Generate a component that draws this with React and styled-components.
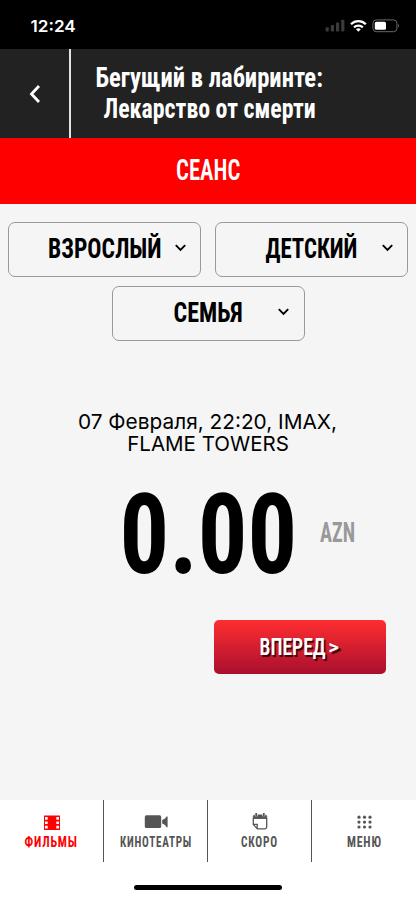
import React, { useLayoutEffect, useRef, useState } from 'react';
import styled, { createGlobalStyle, css } from 'styled-components';

const GlobalStyle = createGlobalStyle`
  * {
    box-sizing: border-box;
  }
  body {
    margin: 0;
    background: #f5f5f5;
  }
  button {
    border: 0;
    padding: 0;
    background: none;
    color: inherit;
    font: inherit;
  }
`;

const Condensed = css`
  font-family: Roboto, "Open Sans", sans-serif;
  font-stretch: 75%;
`;

const FitBox = styled.span`
  display: flex;
  justify-content: center;
  flex: none;
  width: ${(props) => props.$width}px;
`;

const FitText = styled.span`
  flex: none;
  white-space: nowrap;
`;

// squeezes a line of text to the given width, keeping its height
function Fit({ width, children }) {
  const text = useRef(null);
  const [scale, setScale] = useState(1);

  useLayoutEffect(() => {
    setScale(width / text.current.offsetWidth);
  }, [width, children]);

  return (
    <FitBox $width={width}>
      <FitText ref={text} style={{ transform: `scaleX(${scale})` }}>{children}</FitText>
    </FitBox>
  );
}

const Screen = styled.div`
  display: flex;
  flex-direction: column;
  width: 416px;
  height: 900px;
  overflow: hidden;
  background: #f5f5f5;
  color: #000;
  ${Condensed}
`;

const StatusBar = styled.div`
  display: flex;
  justify-content: space-between;
  flex: none;
  height: 49px;
  padding: 16px 16px 0 31px;
  background: #000;
  color: #fff;
  font: 600 16px/20px Inter, sans-serif;
`;

const Header = styled.header`
  display: flex;
  flex: none;
  height: 89px;
  background: #222;
  color: #fff;
`;

const BackButton = styled.button`
  display: flex;
  align-items: center;
  justify-content: center;
  width: 71px;
  border-right: 2px solid #e4e4e4;
`;

const Title = styled.h1`
  display: flex;
  flex-direction: column;
  align-items: center;
  margin: 0;
  padding: 13px 0 0 25px;
  font-size: 28px;
  font-weight: 700;
  line-height: 31px;
`;

const Banner = styled.div`
  display: flex;
  justify-content: center;
  flex: none;
  height: 66px;
  padding-top: 12px;
  background: #f00;
  color: #fff;
  font-size: 29px;
  font-weight: 600;
  line-height: 40px;
`;

const Tickets = styled.div`
  display: flex;
  flex-wrap: wrap;
  justify-content: center;
  gap: 9px 14px;
  flex: none;
  padding: 18px 8px 0;
`;

const Select = styled.button`
  display: grid;
  grid-template-columns: 31px 1fr 31px;
  justify-items: center;
  width: 193px;
  height: 55px;
  padding-top: 6px;
  border: 1px solid #999;
  border-radius: 7px;
  font-size: 28.5px;
  font-weight: 700;
  line-height: 40px;

  & svg {
    margin: 15px 9px 0 0;
  }
`;

const Session = styled.div`
  display: flex;
  flex-direction: column;
  align-items: center;
  flex: none;
  margin-top: 70px;
  font: 400 20.5px/22px Inter, sans-serif;
`;

const Total = styled.div`
  display: flex;
  flex: none;
  height: 110px;
  margin-top: 25px;
  padding-left: 119px;
  font-size: 111px;
  font-weight: 700;
  line-height: 110px;
`;

const Currency = styled.span`
  margin-left: 23px;
  padding-top: 33px;
  color: #999;
  font-size: 27px;
  line-height: 40px;
`;

const NextButton = styled.button`
  display: flex;
  justify-content: center;
  flex: none;
  align-self: flex-end;
  gap: 3px;
  width: 172px;
  height: 54px;
  margin: 30px 30.5px 0 0;
  padding-top: 7px;
  border-radius: 5px;
  background: linear-gradient(#ff2e30, #a90f2e);
  color: #fff;
  font-size: 24px;
  font-weight: 600;
  line-height: 40px;
  text-shadow: 2px 2px 1px rgba(0, 0, 0, 0.75);
`;

const Arrow = styled.span`
  font-size: 20px;
`;

const BottomBar = styled.footer`
  flex: none;
  height: 100px;
  margin-top: auto;
  background: #fff;
`;

const Tabs = styled.nav`
  display: grid;
  grid-template-columns: repeat(4, 1fr);
  height: 62px;
`;

const Tab = styled.button`
  display: flex;
  flex-direction: column;
  align-items: center;
  justify-content: flex-start;
  border-right: 1px solid #555;
  color: ${(props) => (props.$active ? '#f00' : '#555')};
  font-size: 14.5px;
  font-weight: 700;
  letter-spacing: 1px;
  line-height: 20px;

  &:last-child {
    border-right: 0;
  }
  & svg {
    margin: 12px 0 3px;
  }
`;

const HomeIndicator = styled.div`
  width: 148px;
  height: 5px;
  margin: 23px auto 0;
  border-radius: 3px;
  background: #000;
`;

function StatusIcons() {
  return (
    <svg width="76" height="16" viewBox="324 16 76 16" overflow="visible">
      <g fill="#3a3a3a">
        <rect x="325.6" y="27.3" width="3.2" height="4.2" rx="0.8" />
        <rect x="330.8" y="25" width="3.2" height="6.5" rx="0.8" />
        <rect x="336" y="22.5" width="3.2" height="9" rx="0.8" />
        <rect x="341.2" y="19.8" width="3.2" height="11.7" rx="0.8" />
      </g>
      <g fill="none" stroke="#fff" strokeWidth="2.3">
        <path d="M351 24.2 a10.6 10.6 0 0 1 14.8 0" />
        <path d="M354 27.4 a6.3 6.3 0 0 1 8.8 0" />
      </g>
      <path d="M358.4 31.8 l-2.4 -2.5 a3.5 3.5 0 0 1 4.8 0 z" fill="#fff" />
      <rect x="372.9" y="19.9" width="24" height="11.8" rx="3.4" fill="none" stroke="#686868" />
      <rect x="374.8" y="21.8" width="11.2" height="8" rx="1.6" fill="#fff" />
      <path d="M398 23.8 q2 2 0 4 z" fill="#686868" />
    </svg>
  );
}

function Chevron() {
  return (
    <svg width="11" height="8" viewBox="0 0 11 8" fill="none" stroke="#000" strokeWidth="1.9">
      <path d="M0.8 1.2 L5.5 5.9 L10.2 1.2" />
    </svg>
  );
}

function FilmIcon() {
  return (
    <svg width="16" height="18" viewBox="0 0 16 18">
      <path d="M0 3.5h16v14.5H0z" fill="#f00" />
      <path
        d="M1 5h2.7v2.7H1zM1 9.4h2.7v2.7H1zM1 13.8h2.7v2.7H1zM12.3 5H15v2.7h-2.7zM12.3 9.4H15v2.7h-2.7zM12.3 13.8H15v2.7h-2.7z"
        fill="#fff"
      />
    </svg>
  );
}

function CameraIcon() {
  return (
    <svg width="24" height="18" viewBox="0 0 24 18" fill="#555">
      <rect x="0.8" y="3.3" width="16.4" height="12.8" rx="1.6" />
      <path d="M18.2 8 L21 6.6 L22.5 4.4 H23.6 V15.2 H22.5 L21 13 L18.2 11.6 z" />
    </svg>
  );
}

function CalendarIcon() {
  return (
    <svg width="16" height="18" viewBox="0 0 16 18" fill="none" stroke="#555">
      <path d="M1.3 6.4 V4.6 q0 -1.6 1.6 -1.6 H13.1 q1.6 0 1.6 1.6 V6.4 z" fill="#555" />
      <path d="M1.3 6 V12.6 L5.4 16.9 H12.9 q1.8 0 1.8 -1.8 V6 M1.5 12.4 H5.2 V16.6" strokeWidth="1.3" />
      <path d="M4.2 0.6 V4.2 M11.8 0.6 V4.2" stroke="#fff" strokeWidth="2.8" />
      <path d="M4.2 1 V4.2 M11.8 1 V4.2" strokeWidth="1.7" />
    </svg>
  );
}

function MenuIcon() {
  return (
    <svg width="16" height="18" viewBox="0 0 16 18" fill="#555">
      {[5.2, 10.1, 15].map((y) => [3, 8.5, 14].map((x) => (
        <circle key={`${x}-${y}`} cx={x} cy={y} r="1.6" />
      )))}
    </svg>
  );
}

const tickets = [
  { label: 'ВЗРОСЛЫЙ', width: 114 },
  { label: 'ДЕТСКИЙ', width: 92 },
  { label: 'СЕМЬЯ', width: 69 },
];

const tabs = [
  { label: 'ФИЛЬМЫ', width: 53, Icon: FilmIcon, active: true },
  { label: 'КИНОТЕАТРЫ', width: 72, Icon: CameraIcon },
  { label: 'СКОРО', width: 37, Icon: CalendarIcon },
  { label: 'МЕНЮ', width: 35, Icon: MenuIcon },
];

export default function App() {
  return (
    <Screen>
      <GlobalStyle />
      <StatusBar>
        <Fit width={45}>12:24</Fit>
        <StatusIcons />
      </StatusBar>
      <Header>
        <BackButton aria-label="Назад">
          <svg width="12" height="18" viewBox="0 0 12 18" fill="none" stroke="#fff" strokeWidth="2.8">
            <path d="M10 1 L2.5 9 L10 17" />
          </svg>
        </BackButton>
        <Title>
          <Fit width={227}>Бегущий в лабиринте:</Fit>
          <Fit width={212}>Лекарство от смерти</Fit>
        </Title>
      </Header>
      <Banner><Fit width={64}>СЕАНС</Fit></Banner>
      <Tickets>
        {tickets.map(({ label, width }) => (
          <Select key={label}>
            <span />
            <Fit width={width}>{label}</Fit>
            <Chevron />
          </Select>
        ))}
      </Tickets>
      <Session>
        <Fit width={259}>07 Февраля, 22:20, IMAX,</Fit>
        <Fit width={162}>FLAME TOWERS</Fit>
      </Session>
      <Total>
        <Fit width={178}>0.00</Fit>
        <Currency><Fit width={35}>AZN</Fit></Currency>
      </Total>
      <NextButton>
        <Fit width={66}>ВПЕРЕД</Fit>
        <Arrow><Fit width={11}>&gt;</Fit></Arrow>
      </NextButton>
      <BottomBar>
        <Tabs>
          {tabs.map(({ label, width, Icon, active }) => (
            <Tab key={label} $active={active}>
              <Icon />
              <Fit width={width}>{label}</Fit>
            </Tab>
          ))}
        </Tabs>
        <HomeIndicator />
      </BottomBar>
    </Screen>
  );
}
